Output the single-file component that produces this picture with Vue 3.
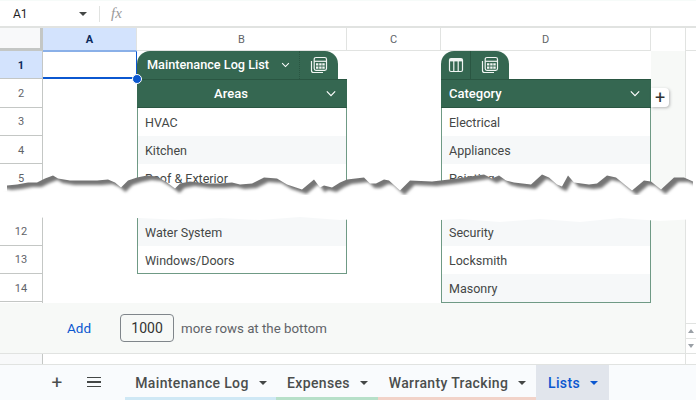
<template>
  <div class="sheets">
    <div class="formula-bar">
      <span class="name-box">A1</span>
      <span class="caret name-caret"></span>
      <span class="divider"></span>
      <span class="fx">fx</span>
    </div>

    <div class="body">
      <div class="pane">
        <div class="col-heads">
          <div class="corner"></div>
          <div v-for="col in columns" :key="col" class="col-head" :class="{ active: col === 'A' }">{{ col }}</div>
        </div>

        <div class="grid">
          <div class="row-heads">
            <template v-for="row in rowNumbers" :key="row">
              <div v-if="row === 'gap'" class="gap"></div>
              <div v-else class="row-head" :class="{ active: row === 1 }">{{ row }}</div>
            </template>
          </div>

          <div class="col-a">
            <div class="selected-cell"></div>
          </div>

          <div class="table-col">
            <div class="tab tab-wide">
              <span class="tab-title">Maintenance Log List</span>
              <svg class="chevron small" viewBox="0 0 12 8"><path d="M1.5 1.5 6 6l4.5-4.5" /></svg>
              <span class="tab-icon last">
                <svg class="icon" viewBox="0 0 18 18">
                  <path class="line" d="M1.5 5v9.500q0 2 2 2H13" />
                  <rect class="line" x="4.200" y="1.500" width="12.300" height="12.800" rx="1.800" />
                  <path class="line" d="M4.200 5.300h12.300" />
                  <path class="fill" d="M6 7.300h2.400v2.300H6zM9.200 7.300h2.400v2.300H9.200zM12.300 7.300h2.400v2.300h-2.400zM6 10.400h2.400v2.300H6zM9.200 10.400h2.400v2.300H9.200zM12.300 10.400h2.400v2.300h-2.400z" />
                </svg>
              </span>
            </div>
            <div class="table-head centered">
              <span>Areas</span>
              <svg class="chevron" viewBox="0 0 12 8"><path d="M1 1.500 6 6.500l5-5" /></svg>
            </div>
            <template v-for="(item, i) in areas" :key="i">
              <div v-if="item === null" class="gap table-gap"></div>
              <div v-else class="table-row" :class="{ striped: item.striped }">{{ item.text }}</div>
            </template>
            <div class="table-end"></div>
          </div>

          <div class="col-c"></div>

          <div class="table-col">
            <div class="tab">
              <span class="tab-icon">
                <svg class="icon" viewBox="0 0 18 18">
                  <rect class="line" x="2.500" y="2.500" width="13" height="13" rx="1.500" />
                  <path class="fill" d="M3 3h12v2.400H3z" />
                  <path class="line" d="M6.800 5v10M11.200 5v10" />
                </svg>
              </span>
              <span class="tab-icon last">
                <svg class="icon" viewBox="0 0 18 18">
                  <path class="line" d="M1.500 5v9.500q0 2 2 2H13" />
                  <rect class="line" x="4.200" y="1.500" width="12.300" height="12.800" rx="1.800" />
                  <path class="line" d="M4.200 5.300h12.300" />
                  <path class="fill" d="M6 7.300h2.400v2.300H6zM9.200 7.300h2.400v2.300H9.200zM12.300 7.300h2.400v2.300h-2.400zM6 10.400h2.400v2.300H6zM9.200 10.400h2.400v2.300H9.200zM12.300 10.400h2.400v2.300h-2.400z" />
                </svg>
              </span>
            </div>
            <div class="table-head">
              <span>Category</span>
              <svg class="chevron" viewBox="0 0 12 8"><path d="M1 1.500 6 6.500l5-5" /></svg>
              <button type="button" class="add-col">+</button>
            </div>
            <template v-for="(item, i) in categories" :key="i">
              <div v-if="item === null" class="gap table-gap"></div>
              <div v-else class="table-row" :class="{ striped: item.striped }">{{ item.text }}</div>
            </template>
            <div class="table-end flush"></div>
          </div>

          <div class="gutter"></div>
        </div>

        <div class="add-bar">
          <a class="add-link">Add</a>
          <span class="add-input">1000</span>
          <span class="add-text">more rows at the bottom</span>
        </div>

        <div class="h-scroll">
          <div class="h-scroll-head"></div>
        </div>
      </div>

      <div class="v-scroll">
        <div class="v-scroll-head"></div>
        <div class="v-scroll-track"></div>
        <div class="v-btn"><span class="tri up"></span></div>
        <div class="v-btn"><span class="tri down"></span></div>
        <div class="v-scroll-foot"></div>
      </div>
    </div>

    <div class="tabs">
      <span class="tool plus">+</span>
      <span class="tool menu"><i></i><i></i><i></i></span>
      <div
        v-for="tab in sheetTabs"
        :key="tab.name"
        class="sheet-tab"
        :class="{ current: tab.current }"
        :style="{ width: tab.width + 'px', borderBottomColor: tab.color }"
      >
        <span>{{ tab.name }}</span>
        <span class="caret"></span>
      </div>
    </div>

    <svg class="tear" viewBox="0 0 696 70" width="696" height="70">
      <defs>
        <filter id="soft" x="-5%" y="-20%" width="110%" height="140%"><feGaussianBlur stdDeviation="0.500" /></filter>
        <filter id="softer" x="-5%" y="-20%" width="110%" height="140%"><feGaussianBlur stdDeviation="1.500" /></filter>
      </defs>
      <path :d="shadowPath" fill="#757575" filter="url(#soft)" />
      <path :d="paperPath" fill="#fff" filter="url(#softer)" transform="translate(4.500 4.500)" />
      <rect x="0" y="30" width="696" height="22" fill="#fff" />
      <path d="M0 50H696V54L660 56 620 53 580 57 540 54 500 57 460 54 420 56 380 53 340 55 300 52 260 55 220 53 180 55 140 53 100 54 60 52 0 54Z" fill="#fff" filter="url(#soft)" />
    </svg>

    <span class="dot"></span>
  </div>
</template>

<script setup>
const columns = ['A', 'B', 'C', 'D']
const rowNumbers = [1, 2, 3, 4, 5, 'gap', 12, 13, 14]

const areas = [
  { text: 'HVAC' },
  { text: 'Kitchen', striped: true },
  { text: 'Roof & Exterior' },
  null,
  { text: 'Water System', striped: true },
  { text: 'Windows/Doors' }
]

const categories = [
  { text: 'Electrical' },
  { text: 'Appliances', striped: true },
  { text: 'Painting' },
  null,
  { text: 'Security', striped: true },
  { text: 'Locksmith' },
  { text: 'Masonry', striped: true }
]

const sheetTabs = [
  { name: 'Maintenance Log', width: 151, color: '#cfe8f5' },
  { name: 'Expenses', width: 102, color: '#b7e0c9' },
  { name: 'Warranty Tracking', width: 158, color: '#f2d3c9' },
  { name: 'Lists', width: 73, color: '#e1e5ec', current: true }
]

// torn edge, traced from the picture: [x, y] with y measured from the top of the svg (page y 165)
const edge = [
  [7, 21], [17, 19], [28, 18], [37, 17], [45, 14], [53, 10], [58, 14], [70, 15], [83, 16], [97, 15], [108, 15],
  [115, 17], [121, 23], [128, 15], [137, 13], [147, 10], [157, 12], [167, 17], [175, 24], [180, 18], [190, 17], [207, 18],
  [220, 19], [232, 17], [240, 20], [252, 18], [264, 13], [277, 13], [287, 20], [302, 24], [314, 15], [320, 22], [324, 21],
  [332, 22], [340, 18], [347, 14], [364, 13], [370, 18], [376, 19], [384, 14], [389, 16], [400, 25], [410, 16], [432, 16],
  [449, 15], [464, 12], [484, 10], [492, 13], [499, 11], [506, 15], [514, 18], [531, 19], [542, 10], [549, 12], [557, 20],
  [562, 21], [568, 11], [574, 17], [589, 20], [597, 18], [607, 11], [616, 12], [632, 26], [644, 15], [651, 17], [661, 24],
  [674, 13], [684, 12], [693, 17]
]

const edgeLine = edge.map(([x, y], i) => `${x} ${y + (i % 2 ? 0.6 : -0.4)}`).join('L')
const shadowPath = `M${edgeLine}L693 40L7 40Z`
const paperPath = `M-10 17L${edgeLine}L706 13L706 44L-10 44Z`
</script>

<style>
body {
  background: #fff;
}
</style>

<style scoped>
.sheets {
  --row: 28.3px;
  --line: #e1e3e1;
  --head-line: #c4c7c5;
  --green: #356751;
  --green-line: #6f9a85;
  position: relative;
  width: 696px;
  height: 400px;
  overflow: hidden;
  display: flex;
  flex-direction: column;
  background: #fff;
  font-family: Roboto, "Liberation Sans", sans-serif;
  color: #444746;
}

.formula-bar {
  height: 25px;
  display: flex;
  align-items: center;
  flex: none;
  border-top: 1px solid #f6fbf9;
  border-bottom: 2px solid #e1e3e1;
  font-size: 12px;
}

.name-box {
  margin-left: 13px;
  width: 66px;
  color: #1f1f1f;
}

.caret {
  display: inline-block;
  width: 0;
  height: 0;
  border-left: 4px solid transparent;
  border-right: 4px solid transparent;
  border-top: 4px solid #444746;
}

.divider {
  width: 1px;
  height: 16px;
  background: #e1e3e1;
  margin-left: 12px;
}

.fx {
  margin-left: 11px;
  font-family: "Liberation Serif", serif;
  font-style: italic;
  font-size: 15px;
  color: #999;
}

.body {
  display: flex;
  height: 337px;
  flex: none;
}

.pane {
  width: 685px;
  display: flex;
  flex-direction: column;
}

.col-heads {
  display: grid;
  grid-template-columns: 43px 94px 210px 94px 210px;
  height: 23px;
  flex: none;
}

.corner {
  background: #f8f9fa;
  border-right: 3px solid #c4c7c5;
  border-bottom: 3px solid #c4c7c5;
  box-sizing: border-box;
}

.col-head {
  display: flex;
  align-items: center;
  justify-content: center;
  font-size: 11px;
  color: #5f6368;
  border-right: 1px solid var(--line);
  border-bottom: 1px solid var(--line);
  box-sizing: border-box;
}

.col-head.active {
  background: #d3e3fd;
  font-weight: 700;
  color: #0b2a5c;
  border-bottom: 1px solid #8ab0e8;
}

.grid {
  position: relative;
  display: grid;
  grid-template-columns: 43px 94px 210px 94px 210px 34px;
  height: 252px;
  flex: none;
  background: #fff;
}

.row-heads {
  border-right: 1px solid var(--head-line);
}

.row-head {
  height: var(--row);
  display: flex;
  align-items: center;
  justify-content: center;
  box-sizing: border-box;
  padding-top: 1px;
  font-size: 11px;
  color: #5f6368;
  border-bottom: 1px solid var(--head-line);
}

.row-head.active {
  background: #d3e3fd;
  font-weight: 700;
  color: #0b2a5c;
}

.gap {
  height: 25px;
}

.selected-cell {
  height: var(--row);
  box-sizing: border-box;
  border: 1px solid #0b57d0;
  border-top-color: #8ab0e8;
  border-left: 0;
  border-bottom-width: 2px;
}

.table-col {
  display: flex;
  flex-direction: column;
}

.tab {
  align-self: flex-start;
  display: flex;
  align-items: center;
  height: var(--row);
  background: var(--green);
  color: #fff;
  border-radius: 13px 13px 0 0;
  box-sizing: border-box;
}

.tab-wide {
  width: 201px;
}

.tab-title {
  margin-left: 10px;
  padding-bottom: 2px;
  font-size: 12.7px;
  font-weight: 500;
  white-space: nowrap;
}

.chevron {
  width: 10px;
  height: 7px;
  flex: none;
  fill: none;
  stroke: #fff;
  stroke-width: 1.400;
}

.chevron.small {
  margin-left: 12px;
  width: 9px;
  height: 6px;
}

.tab-icon {
  width: 34px;
  height: 100%;
  display: flex;
  align-items: center;
  justify-content: center;
  border-right: 1px solid #2a5642;
  box-sizing: border-box;
}

.tab-icon.last {
  border-right: 0;
}

.tab-wide .tab-icon {
  margin-left: auto;
  width: 39px;
  border-left: 1px dotted #2a5642;
}

.tab:not(.tab-wide) .tab-icon:first-child {
  width: 30px;
}

.tab:not(.tab-wide) .tab-icon.last {
  width: 38px;
}

.icon {
  width: 18px;
  height: 18px;
}

.icon .line {
  fill: none;
  stroke: #f1f5f3;
  stroke-width: 1.200;
}

.icon .fill {
  fill: #f1f5f3;
}

.table-head {
  position: relative;
  height: var(--row);
  flex: none;
  display: flex;
  align-items: center;
  justify-content: space-between;
  padding: 0 11px 0 8px;
  box-sizing: border-box;
  background: var(--green);
  border-top: 1px solid #2a5642;
  border-bottom: 1px solid #2a5642;
  color: #fff;
  font-size: 13px;
  font-weight: 500;
}

.table-head.centered {
  justify-content: center;
  padding-right: 30px;
}

.table-head.centered .chevron {
  position: absolute;
  right: 11px;
  top: 10px;
}

.add-col {
  position: absolute;
  left: 100%;
  top: 8px;
  width: 18px;
  height: 19px;
  padding: 0;
  border: 0;
  background: #fff;
  border-radius: 0 4px 4px 0;
  box-shadow: 1px 1px 3px rgba(60, 64, 67, 0.35);
  font-family: inherit;
  font-size: 18px;
  line-height: 18px;
  color: #333;
}

.table-row {
  height: var(--row);
  flex: none;
  display: flex;
  align-items: center;
  padding: 1px 0 0 7px;
  box-sizing: border-box;
  font-size: 12.5px;
  color: #444746;
  background: #fff;
  border-left: 1.500px solid var(--green-line);
  border-right: 1.500px solid var(--green-line);
}

.table-row.striped {
  background: #f6f8f9;
}

.table-gap {
  background: #fff;
}

.table-end {
  height: 1px;
  flex: none;
  background: var(--green-line);
  margin-top: -1px;
  position: relative;
}

.table-end.flush {
  margin-top: 0;
}

.gutter {
  background: #f7f9f7;
}

.add-bar {
  height: 50px;
  flex: none;
  display: flex;
  align-items: center;
  background: #f7f9f7;
  border-bottom: 1px solid var(--line);
  font-size: 13.3px;
}

.add-link {
  margin-left: 67px;
  color: #0b57d0;
  font-weight: 400;
  font-size: 13.500px;
}

.add-input {
  margin-left: 29px;
  width: 54px;
  height: 28px;
  display: flex;
  align-items: center;
  justify-content: center;
  box-sizing: border-box;
  background: #f7f9f7;
  border: 1px solid #80868b;
  border-radius: 4px;
  font-size: 14px;
  color: #333;
}

.add-text {
  margin-left: 7px;
  color: #5f6368;
}

.h-scroll {
  flex: 1;
  border-bottom: 1px solid var(--line);
}

.h-scroll-head {
  width: 43px;
  height: 100%;
  box-sizing: border-box;
  border-right: 1px solid var(--head-line);
  background: #f8f9fa;
}

.v-scroll {
  flex: 1;
  display: flex;
  flex-direction: column;
  border-left: 1px solid var(--line);
}

.v-scroll-head {
  height: 23px;
  border-bottom: 1px solid var(--line);
  box-sizing: border-box;
}

.v-scroll-track {
  height: 272px;
}

.v-btn {
  height: 15px;
  display: flex;
  align-items: center;
  justify-content: center;
  border-top: 1px solid var(--line);
  box-sizing: border-box;
}

.tri {
  width: 0;
  height: 0;
  border-left: 3px solid transparent;
  border-right: 3px solid transparent;
}

.tri.up {
  border-bottom: 4px solid #9aa0a6;
}

.tri.down {
  border-top: 4px solid #9aa0a6;
}

.v-scroll-foot {
  flex: 1;
  border-top: 1px solid var(--line);
  border-bottom: 1px solid var(--line);
}

.tabs {
  flex: 1;
  display: flex;
  align-items: stretch;
  background: #f9fbfd;
  font-size: 14px;
  font-weight: 500;
  letter-spacing: 0.35px;
  color: #4b4e4d;
}

.tool {
  display: flex;
  align-items: center;
  justify-content: center;
  margin-top: 2px;
  margin-bottom: 3px;
}

.plus {
  margin-left: 50px;
  width: 14px;
  font-size: 19px;
  font-weight: 400;
}

.menu {
  margin-left: 23px;
  margin-right: 24px;
  width: 14px;
  flex-direction: column;
  gap: 3px;
}

.menu i {
  display: block;
  width: 14px;
  height: 1.500px;
  background: #444746;
}

.sheet-tab {
  display: flex;
  align-items: center;
  justify-content: center;
  gap: 10px;
  padding: 3px 0 0 1px;
  box-sizing: border-box;
  border-bottom: 3px solid transparent;
  white-space: nowrap;
}

.sheet-tab.current {
  background: #e1e5ec;
  color: #0b57d0;
}

.sheet-tab.current .caret {
  border-top-color: #0b57d0;
}

.tear {
  position: absolute;
  left: 0;
  top: 165px;
}

.dot {
  position: absolute;
  left: 131.500px;
  top: 74px;
  width: 8px;
  height: 8px;
  border-radius: 50%;
  background: #0b57d0;
  border: 1px solid #fff;
}
</style>
